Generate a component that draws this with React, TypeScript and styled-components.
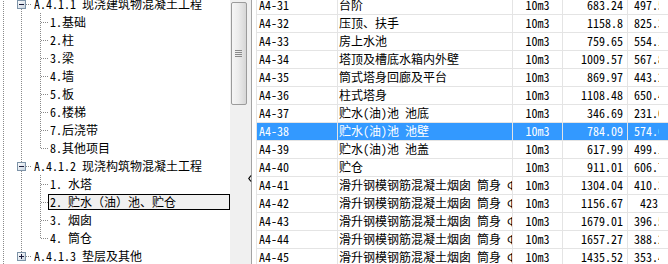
import React from "react";
import styled, { createGlobalStyle } from "styled-components";

const FONT = `"Noto Sans Mono CJK SC", "Noto Sans CJK SC", "DejaVu Sans Mono", monospace`;

const Global = createGlobalStyle`
  html, body { margin: 0; padding: 0; background: #fff; overflow: hidden; }
  body { font-family: ${FONT}; font-size: 12px; color: #000; }
`;

const Window = styled.div`
  width: 668px;
  height: 264px;
  display: flex;
  overflow: hidden;
  background: #fff;
`;

/* ---------- tree ---------- */
const TreePane = styled.div`
  width: 230px;
  flex: none;
  overflow: hidden;
`;

const TreeList = styled.div`
  margin-top: -5px;
  display: flex;
  flex-direction: column;
`;

const TreeRow = styled.div`
  height: 18px;
  flex: none;
  display: flex;
  align-items: center;
`;

const Lines = styled.svg`
  flex: none;
  display: block;
`;

const Label = styled.div<{ $focused?: boolean; $grow?: boolean }>`
  box-sizing: border-box;
  height: 16px;
  line-height: 14px;
  padding-left: 1px;
  white-space: nowrap;
  border: 1px solid ${(p) => (p.$focused ? "#000" : "transparent")};
  background: ${(p) => (p.$focused ? "#f0f0f0" : "transparent")};
  flex: ${(p) => (p.$grow ? "1" : "none")};
`;

const DOT = "#8a8a8a";

const VLine = ({ x, y1 = 0, y2 = 18 }: { x: number; y1?: number; y2?: number }) => (
  <line x1={x + 0.5} y1={y1} x2={x + 0.5} y2={y2} stroke={DOT} strokeDasharray="1 1" shapeRendering="crispEdges" />
);
const HLine = ({ x1, x2 }: { x1: number; x2: number }) => (
  <line x1={x1} y1={9.5} x2={x2} y2={9.5} stroke={DOT} strokeDasharray="1 1" shapeRendering="crispEdges" />
);

const ExpandBox = ({ expanded }: { expanded: boolean }) => (
  <g shapeRendering="crispEdges">
    <defs>
      <linearGradient id="bx" x1="0" y1="0" x2="1" y2="1">
        <stop offset="0" stopColor="#ffffff" />
        <stop offset="1" stopColor="#c6d2de" />
      </linearGradient>
    </defs>
    <rect x={17.5} y={5.5} width={8} height={8} fill="url(#bx)" stroke="#7d93a8" />
    <line x1={19} y1={9.5} x2={24} y2={9.5} stroke="#1a1a3a" />
    {!expanded && <line x1={21.5} y1={7} x2={21.5} y2={12} stroke="#1a1a3a" />}
  </g>
);

type GroupNode = { kind: "group"; label: string; expanded: boolean; prev: boolean; next: boolean };
type ChildNode = { kind: "child"; label: string; last: boolean; groupNext: boolean; focused?: boolean };
type TreeNode = GroupNode | ChildNode;

const tree: TreeNode[] = [
  { kind: "group", label: "A.4.1.1 现浇建筑物混凝土工程", expanded: true, prev: true, next: true },
  { kind: "child", label: "1.基础", last: false, groupNext: true },
  { kind: "child", label: "2.柱", last: false, groupNext: true },
  { kind: "child", label: "3.梁", last: false, groupNext: true },
  { kind: "child", label: "4.墙", last: false, groupNext: true },
  { kind: "child", label: "5.板", last: false, groupNext: true },
  { kind: "child", label: "6.楼梯", last: false, groupNext: true },
  { kind: "child", label: "7.后浇带", last: false, groupNext: true },
  { kind: "child", label: "8.其他项目", last: true, groupNext: true },
  { kind: "group", label: "A.4.1.2 现浇构筑物混凝土工程", expanded: true, prev: true, next: true },
  { kind: "child", label: "1. 水塔", last: false, groupNext: true },
  { kind: "child", label: "2. 贮水（油）池、贮仓", last: false, groupNext: true, focused: true },
  { kind: "child", label: "3. 烟囱", last: false, groupNext: true },
  { kind: "child", label: "4. 筒仓", last: true, groupNext: true },
  { kind: "group", label: "A.4.1.3 垫层及其他", expanded: false, prev: true, next: false },
];

const TreeItem = ({ node }: { node: TreeNode }) => {
  if (node.kind === "group") {
    return (
      <TreeRow>
        <Lines width={32} height={18}>
          <VLine x={3} />
          {node.prev && <VLine x={21} y1={0} y2={5} />}
          {node.next && <VLine x={21} y1={14} y2={18} />}
          <HLine x1={26} x2={32} />
          <ExpandBox expanded={node.expanded} />
        </Lines>
        <Label>{node.label}</Label>
      </TreeRow>
    );
  }
  return (
    <TreeRow>
      <Lines width={48} height={18}>
        <VLine x={3} />
        {node.groupNext && <VLine x={21} />}
        <VLine x={40} y1={0} y2={node.last ? 10 : 18} />
        <HLine x1={41} x2={48} />
      </Lines>
      <Label $focused={node.focused} $grow={node.focused}>
        {node.label}
      </Label>
    </TreeRow>
  );
};

/* ---------- scrollbar & splitter ---------- */
const ScrollTrack = styled.div`
  width: 17px;
  flex: none;
  box-sizing: border-box;
  background: #f0f0f0;
  padding-top: 2px;
  display: flex;
  flex-direction: column;
  align-items: center;
`;

const Thumb = styled.div`
  width: 16px;
  height: 103px;
  box-sizing: border-box;
  border: 1px solid #9b9b9b;
  border-radius: 2px;
  background: linear-gradient(to right, #f6f6f6 0%, #ececec 45%, #d6d6d6 100%);
  display: flex;
  align-items: center;
  justify-content: center;
`;

const Splitter = styled.div`
  width: 5px;
  flex: none;
  box-sizing: border-box;
  background: #f0f0f0;
  border-right: 1px solid #a3a3a3;
  display: flex;
  flex-direction: column;
  align-items: flex-start;
`;

const SplitArrow = styled.svg`
  display: block;
  margin-top: 175px;
  margin-left: 1px;
`;

/* ---------- grid ---------- */
const TablePane = styled.div`
  flex: 1;
  min-width: 0;
  padding-left: 4px;
  overflow: hidden;
`;

const Table = styled.div`
  margin-top: -3px;
  display: flex;
  flex-direction: column;
`;

const GRID = "#e4e4e4";

const Row = styled.div<{ $selected?: boolean }>`
  display: grid;
  grid-template-columns: 81px 175px 50px 65px 1fr;
  height: 18px;
  box-sizing: border-box;
  border-bottom: 1px solid ${GRID};
  background: ${(p) => (p.$selected ? "#3399ff" : "#fff")};
  color: ${(p) => (p.$selected ? "#fff" : "#000")};
`;

const Cell = styled.div<{ $align?: "left" | "center" | "right"; $pl?: number; $pr?: number }>`
  border-left: 1px solid ${GRID};
  line-height: 15px;
  white-space: nowrap;
  overflow: hidden;
  text-align: ${(p) => p.$align ?? "left"};
  padding-left: ${(p) => p.$pl ?? 0}px;
  padding-right: ${(p) => p.$pr ?? 0}px;
`;

const Clip = styled.span`
  display: block;
  width: 25px;
  overflow: hidden;
  white-space: pre;
`;

const FLUE = "滑升钢模钢筋混凝土烟囱 筒身 Φ";

const data: [string, string, string, string, string][] = [
  ["A4-31", "台阶", "10m3", "683.24", "497.51"],
  ["A4-32", "压顶、扶手", "10m3", "1158.8", "825.36"],
  ["A4-33", "房上水池", "10m3", "759.65", "554.12"],
  ["A4-34", "塔顶及槽底水箱内外壁", "10m3", "1009.57", "567.83"],
  ["A4-35", "筒式塔身回廊及平台", "10m3", "869.97", "443.27"],
  ["A4-36", "柱式塔身", "10m3", "1108.48", "650.44"],
  ["A4-37", "贮水(油)池 池底", "10m3", "346.69", "231.09"],
  ["A4-38", "贮水(油)池 池壁", "10m3", "784.09", "574.62"],
  ["A4-39", "贮水(油)池 池盖", "10m3", "617.99", "499.18"],
  ["A4-40", "贮仓", "10m3", "911.01", "606.75"],
  ["A4-41", FLUE, "10m3", "1304.04", "410.33"],
  ["A4-42", FLUE, "10m3", "1156.67", " 423.9"],
  ["A4-43", FLUE, "10m3", "1679.01", "396.58"],
  ["A4-44", FLUE, "10m3", "1657.27", "388.21"],
  ["A4-45", FLUE, "10m3", "1435.52", "353.47"],
];

export default function App() {
  return (
    <>
      <Global />
      <Window>
        <TreePane>
          <TreeList>
            {tree.map((n, i) => (
              <TreeItem key={i} node={n} />
            ))}
          </TreeList>
        </TreePane>
        <ScrollTrack>
          <Thumb>
            <svg width={7} height={8} shapeRendering="crispEdges">
              {[0, 2, 4, 6].map((y) => (
                <line key={y} x1={0} y1={y + 0.5} x2={7} y2={y + 0.5} stroke="#8a8a8a" />
              ))}
            </svg>
          </Thumb>
        </ScrollTrack>
        <Splitter>
          <SplitArrow width={4} height={7}>
            <polyline points="3,0.5 0.8,3.5 3,6.5" fill="none" stroke="#000" strokeWidth={1.2} />
          </SplitArrow>
        </Splitter>
        <TablePane>
          <Table>
            {data.map((r) => (
              <Row key={r[0]} $selected={r[0] === "A4-38"}>
                <Cell $pl={2}>{r[0]}</Cell>
                <Cell $pl={1}>{r[1]}</Cell>
                <Cell $align="center">{r[2]}</Cell>
                <Cell $align="right" $pr={4}>{r[3]}</Cell>
                <Cell $pl={6}>
                  <Clip>{r[4]}</Clip>
                </Cell>
              </Row>
            ))}
          </Table>
        </TablePane>
      </Window>
    </>
  );
}
